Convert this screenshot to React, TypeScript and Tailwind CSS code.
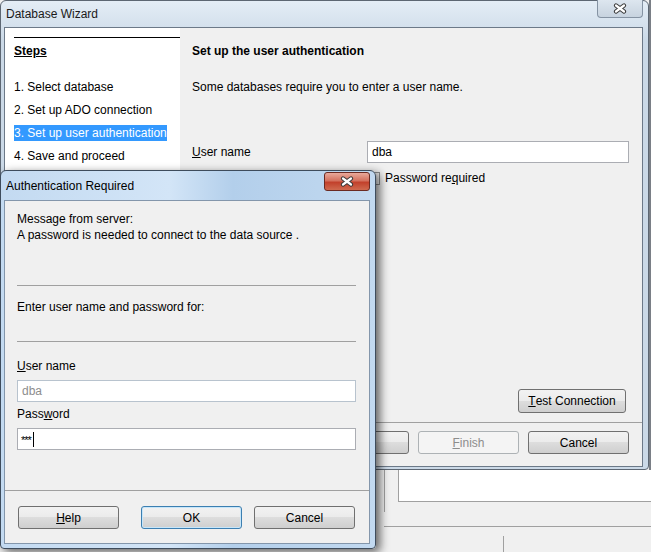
import React from 'react';

function CloseGlyph() {
  return (
    <svg width="14" height="11" viewBox="0 0 14 11">
      <path d="M3 2.5 L11 8.5 M11 2.5 L3 8.5" stroke="#3a3a3a" strokeWidth="4.2" strokeLinecap="round" />
      <path d="M3 2.5 L11 8.5 M11 2.5 L3 8.5" stroke="#ffffff" strokeWidth="2.2" strokeLinecap="round" />
    </svg>
  );
}

function Btn({ children, disabled, focused, className = '' }: { children: React.ReactNode; disabled?: boolean; focused?: boolean; className?: string }) {
  let cls = 'border-[#707070] bg-[linear-gradient(#f2f2f2,#ebebeb_50%,#dddddd_50%,#cfcfcf)] text-black';
  if (disabled) cls = 'border-[#adb2b5] bg-[#f4f4f4] text-[#8d8d8d]';
  if (focused) cls = 'border-[#3c7fb1] bg-[linear-gradient(#f2f2f2,#ebebeb_50%,#dddddd_50%,#cfcfcf)] shadow-[inset_0_0_0_1px_#c6e6fa] text-black';
  return (
    <div className={`flex h-[23px] w-[101px] shrink-0 items-center justify-center rounded-[3px] border text-[12px] ${cls} ${className}`}>
      {children}
    </div>
  );
}

export default function App() {
  return (
    <div className="relative h-[552px] w-[651px] overflow-hidden bg-[#f0f0f0] font-['Liberation_Sans',Arial,sans-serif] text-[12px] leading-[16px] text-black">
      {/* window behind, bottom right */}
      <div className="absolute left-[649px] top-0 h-[470px] w-[2px] bg-[#7a7f86]" />
      <div className="absolute left-[398px] top-[470px] h-[32px] w-[253px] border-b border-l border-[#a0a0a0] bg-white" />
      <div className="absolute left-[384px] top-[470px] h-[42px] w-px bg-[#a0a0a0]" />
      <div className="absolute left-[384px] top-[526px] h-px w-[267px] bg-[#a0a0a0]" />
      <div className="absolute left-[503px] top-[536px] h-[16px] w-px bg-[#a0a0a0]" />

      {/* Database Wizard */}
      <div className="absolute left-0 top-0 h-[470px] w-[649px] rounded-t-[6px] rounded-b-[4px] border border-[#5d6773] bg-[linear-gradient(#e4edf6,#cbd9e7_40px,#cbd9e7)]">
        <div className="relative flex h-[26px] items-center pl-[5px] text-[#1a1a1a]">
          Database Wizard
          <div className="absolute right-[5px] top-[-1px] flex h-[18px] w-[46px] items-center justify-center rounded-b-[4px] border border-t-0 border-[#8593a3] bg-[linear-gradient(#dde6ef,#c7d3df)]">
            <CloseGlyph />
          </div>
        </div>
        <div className="ml-[3px] flex h-[440px] w-[639px] flex-col border border-[#6c7988] bg-[#f0f0f0]">
          <div className="flex h-[394px]">
            {/* steps */}
            <div className="flex w-[175px] shrink-0 flex-col bg-white pl-[9px] pt-[9px]">
              <div className="h-px bg-black" />
              <div className="mt-[5px] font-bold underline">Steps</div>
              <div className="mt-[20px] flex flex-col gap-[7px]">
                <div>1. Select database</div>
                <div>2. Set up ADO connection</div>
                <div>
                  <span className="inline-block bg-[#3399ff] text-white">3. Set up user authentication</span>
                </div>
                <div>4. Save and proceed</div>
              </div>
            </div>
            {/* content */}
            <div className="flex min-w-0 flex-1 flex-col pl-[12px] pr-[16px] pt-[15px]">
              <div className="font-bold">Set up the user authentication</div>
              <div className="mt-[20px]">Some databases require you to enter a user name.</div>
              <div className="mt-[46px] flex h-[22px] items-center">
                <div className="w-[175px] shrink-0">
                  <span className="underline">U</span>ser name
                </div>
                <div className="flex h-[22px] w-[262px] shrink-0 items-center border border-[#abadb3] bg-white pl-[4px]">dba</div>
              </div>
              <div className="mt-[7px] flex items-center pl-[175px]">
                <div className="h-[13px] w-[13px] border border-[#8e8f8f] bg-[linear-gradient(135deg,#dcdcdc,#fbfbfb)]" />
                <div className="ml-[5px]">
                  Password re<span className="underline">q</span>uired
                </div>
              </div>
              <div className="mt-auto mb-[9px] flex justify-end">
                <div className="flex h-[24px] w-[108px] items-center justify-center rounded-[3px] border border-[#707070] bg-[linear-gradient(#f2f2f2,#ebebeb_50%,#dddddd_50%,#cfcfcf)]">
                  <span className="underline">T</span>est Connection
                </div>
              </div>
            </div>
          </div>
          <div className="h-px bg-[#a0a0a0]" />
          <div className="flex justify-end gap-[9px] pr-[13px] pt-[8px]">
            <Btn>
              <span className="underline">H</span>elp
            </Btn>
            <Btn>
              &lt; <span className="underline">B</span>ack
            </Btn>
            <Btn>
              <span className="underline">N</span>ext &gt;
            </Btn>
            <Btn disabled>
              <span className="underline">F</span>inish
            </Btn>
            <Btn>Cancel</Btn>
          </div>
        </div>
      </div>

      {/* Authentication Required */}
      <div className="absolute left-0 top-[170px] h-[379px] w-[376px] rounded-t-[6px] rounded-b-[4px] border border-[#3e4c5c] bg-[linear-gradient(90deg,#c3daf1,#d3e5f7_45%,#b3cfeb_62%,#c2d9f0)] shadow-[4px_3px_10px_rgba(0,0,0,0.6)]">
        <div className="relative flex h-[29px] items-center pl-[5px]">
          Authentication Required
          <div className="absolute right-[5px] top-[1px] flex h-[19px] w-[46px] items-center justify-center rounded-[3px] border border-[#6b2a22] bg-[linear-gradient(#e9a99b,#d4715e_45%,#c2412c_55%,#cf6a4f)]">
            <CloseGlyph />
          </div>
        </div>
        <div className="ml-[3px] flex h-[344px] w-[366px] flex-col border border-[#8396ab] bg-[#f0f0f0]">
          <div className="flex flex-col pl-[12px] pr-[13px] pt-[10px]">
            <div>Message from server:</div>
            <div>A password is needed to connect to the data source .</div>
            <div className="mt-[42px] h-px bg-[#a0a0a0]" />
            <div className="mt-[13px]">Enter user name and password for:</div>
            <div className="mt-[26px] h-px bg-[#a0a0a0]" />
            <div className="mt-[16px]">
              <span className="underline">U</span>ser name
            </div>
            <div className="mt-[6px] flex h-[22px] items-center border border-[#b8c3ce] bg-white pl-[4px] text-[#8d8d8d]">dba</div>
            <div className="mt-[4px]">
              Pass<span className="underline">w</span>ord
            </div>
            <div className="mt-[6px] flex h-[22px] items-center border border-[#abadb3] bg-white pl-[3px]">
              <span className="mt-[3px] text-[11px] leading-none tracking-[-1px]">***</span>
              <span className="ml-[2px] h-[15px] w-px bg-black" />
            </div>
          </div>
          <div className="mt-[40px] h-px bg-[#a0a0a0]" />
          <div className="flex pl-[13px] pt-[15px]">
            <Btn>
              <span className="underline">H</span>elp
            </Btn>
            <Btn focused className="ml-[22px]">
              OK
            </Btn>
            <Btn className="ml-[12px]">Cancel</Btn>
          </div>
        </div>
      </div>
    </div>
  );
}
